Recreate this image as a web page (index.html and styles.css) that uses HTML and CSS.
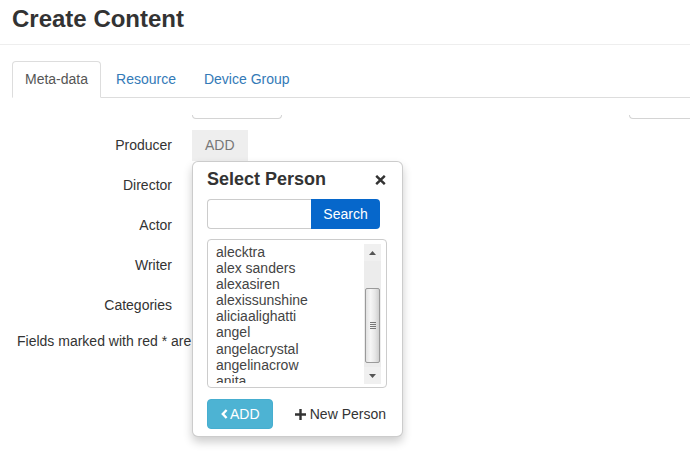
FILE: index.html
```html
<!DOCTYPE html>
<html>
<head>
<meta charset="utf-8">
<link rel="stylesheet" href="styles.css">
</head>
<body>
<header class="page-header">
  <h1 class="page-title">Create Content</h1>
</header>
<nav class="tabs">
  <a class="tab active">Meta-data</a>
  <a class="tab">Resource</a>
  <a class="tab">Device Group</a>
</nav>
<section class="form">
  <div class="ghost-row">
    <div class="ghost ghost-left"></div>
    <div class="ghost ghost-right"></div>
  </div>
  <div class="row"><div class="label">Producer</div><div class="value"><span class="btn-add-gray">ADD</span></div></div>
  <div class="row"><div class="label">Director</div><div class="value"></div></div>
  <div class="row"><div class="label">Actor</div><div class="value"></div></div>
  <div class="row"><div class="label">Writer</div><div class="value"></div></div>
  <div class="row"><div class="label">Categories</div><div class="value"></div></div>
  <p class="note">Fields marked with red * are required.</p>
</section>

<div class="popover">
  <div class="pop-title">
    <span>Select Person</span>
    <svg class="close" width="11" height="10" viewBox="0 0 11 10"><path d="M1.2 0.8 L9.8 9.2 M9.8 0.8 L1.2 9.2" stroke="#333" stroke-width="2.4" fill="none"/></svg>
  </div>
  <div class="search-group">
    <input class="search-input" type="text">
    <span class="search-btn">Search</span>
  </div>
  <div class="listbox">
    <div class="items">
      <div class="item">alecktra</div>
      <div class="item">alex sanders</div>
      <div class="item">alexasiren</div>
      <div class="item">alexissunshine</div>
      <div class="item">aliciaalighatti</div>
      <div class="item">angel</div>
      <div class="item">angelacrystal</div>
      <div class="item">angelinacrow</div>
      <div class="item">anita</div>
    </div>
    <div class="scrollbar">
      <div class="sb-btn"><svg width="7" height="4" viewBox="0 0 7 4"><path d="M0 4 L3.5 0 L7 4 Z" fill="#555"/></svg></div>
      <div class="sb-track">
        <div class="sb-thumb">
          <span class="grip"></span><span class="grip"></span><span class="grip"></span><span class="grip"></span>
        </div>
      </div>
      <div class="sb-btn"><svg width="7" height="4" viewBox="0 0 7 4"><path d="M0 0 L7 0 L3.5 4 Z" fill="#555"/></svg></div>
    </div>
  </div>
  <div class="pop-footer">
    <span class="btn-info"><svg width="7" height="10" viewBox="0 0 7 10"><path d="M5.6 1 L1.8 5 L5.6 9" stroke="#fff" stroke-width="2.4" fill="none"/></svg>ADD</span>
    <span class="new-person"><svg width="11" height="11" viewBox="0 0 11 11"><path d="M5.5 0 V11 M0 5.5 H11" stroke="#333" stroke-width="2.4" fill="none"/></svg>New Person</span>
  </div>
</div>
</body>
</html>
```
FILE: styles.css
```css
html, body {
  margin: 0;
  padding: 0;
  background: #fff;
}
body {
  font-family: "Liberation Sans", Arial, sans-serif;
  font-size: 14px;
  color: #333;
}
.page-header {
  padding: 6px 12px 12px;
  border-bottom: 1px solid #eee;
}
.page-title {
  margin: 0;
  font-size: 24px;
  line-height: 26px;
  font-weight: bold;
  color: #333;
}
.tabs {
  display: flex;
  margin: 16px 0 0 12px;
  border-bottom: 1px solid #ddd;
}
.tab {
  display: block;
  padding: 8px 12px;
  line-height: 19px;
  margin-right: 2px;
  margin-bottom: -1px;
  border: 1px solid transparent;
  border-radius: 4px 4px 0 0;
  color: #337ab7;
}
.tab.active {
  color: #555;
  border-color: #ddd;
  border-bottom-color: #fff;
  background: #fff;
}
.ghost-row {
  display: flex;
  justify-content: space-between;
  margin-top: 17px;
  height: 4px;
}
.ghost {
  height: 3px;
  border: 1px solid #d4d4d4;
  border-top: none;
  border-radius: 0 0 4px 4px;
}
.ghost-left {
  margin-left: 192px;
  width: 88px;
}
.ghost-right {
  width: 60px;
  border-right: none;
  border-radius: 0 0 0 4px;
}
.row {
  display: grid;
  grid-template-columns: 172px 1fr;
  column-gap: 20px;
  height: 40px;
}
.ghost-row + .row {
  margin-top: 11px;
}
.label {
  text-align: right;
  padding-top: 5px;
  line-height: 20px;
  color: #333;
}
.btn-add-gray {
  display: inline-block;
  background: #eee;
  color: #777;
  padding: 5px 13px 6px;
  line-height: 20px;
}
.note {
  margin: 1px 0 0 17px;
  line-height: 20px;
  color: #333;
}
.popover {
  position: absolute;
  top: 161px;
  left: 192px;
  height: 274px;
  width: 180px;
  box-sizing: content-box;
  background: #fff;
  border: 1px solid rgba(0, 0, 0, 0.2);
  border-radius: 6px;
  box-shadow: 0 5px 10px rgba(0, 0, 0, 0.2);
  padding: 0 15px 0 14px;
  display: flex;
  flex-direction: column;
}
.pop-title {
  display: flex;
  justify-content: space-between;
  align-items: center;
  padding-top: 7px;
  font-size: 18px;
  font-weight: bold;
  line-height: 20px;
  color: #333;
}
.close {
  margin-right: 1px;
  margin-top: 1px;
}
.search-group {
  display: flex;
  margin-top: 10px;
  height: 30px;
}
.search-input {
  box-sizing: border-box;
  width: 104px;
  height: 30px;
  margin: 0;
  border: 1px solid #ccc;
  border-right: none;
  border-radius: 4px 0 0 4px;
  padding: 0 6px;
  font: inherit;
}
.search-btn {
  box-sizing: border-box;
  width: 69px;
  height: 30px;
  line-height: 30px;
  text-align: center;
  background: #0667cb;
  color: #fff;
  border-radius: 0 4px 4px 0;
}
.listbox {
  box-sizing: border-box;
  margin-top: 10px;
  height: 149px;
  border: 1px solid #ccc;
  border-radius: 4px;
  padding: 4px 5px 4px 4px;
  display: flex;
  overflow: hidden;
}
.items {
  flex: 1;
  overflow: hidden;
  height: 139px;
}
.item {
  padding: 0 4px;
  line-height: 16.1px;
  color: #444;
  white-space: nowrap;
}
.scrollbar {
  width: 17px;
  height: 140px;
  display: flex;
  flex-direction: column;
  background: #f0f0f0;
}
.sb-btn {
  height: 17px;
  display: flex;
  align-items: center;
  justify-content: center;
  background: #f0f0f0;
}
.sb-track {
  flex: 1;
  padding-top: 27px;
  display: flex;
  justify-content: center;
  background: #ececec;
}
.sb-thumb {
  box-sizing: border-box;
  width: 15px;
  height: 75px;
  border: 1px solid #9a9a9a;
  border-radius: 2px;
  background: linear-gradient(to right, #e2e2e2, #f6f6f6 35%, #e6e6e6 70%, #cfcfcf);
  display: flex;
  flex-direction: column;
  align-items: center;
  justify-content: center;
  gap: 1px;
}
.grip {
  display: block;
  width: 6px;
  height: 1px;
  background: #777;
}
.pop-footer {
  display: flex;
  justify-content: space-between;
  align-items: center;
  margin-top: 11px;
}
.btn-info {
  box-sizing: border-box;
  display: inline-flex;
  align-items: center;
  gap: 2px;
  width: 66px;
  height: 30px;
  padding-left: 13px;
  background: #4db3d3;
  border: 1px solid #46aed0;
  border-radius: 4px;
  color: #fff;
  line-height: 20px;
}
.new-person {
  display: inline-flex;
  align-items: center;
  gap: 4px;
  margin-right: 1px;
  color: #333;
}
```
